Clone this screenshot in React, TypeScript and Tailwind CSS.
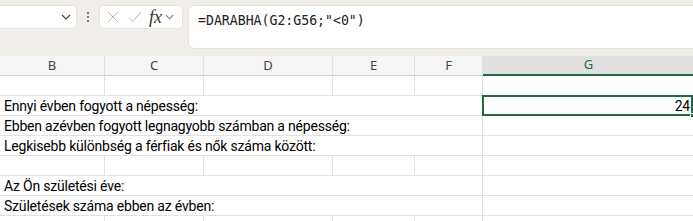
import React from "react";

const cols = ["B", "C", "D", "E", "F", "G"];
const widths = ["w-[105px]", "w-[99px]", "w-[129px]", "w-[82px]", "w-[68px]", "w-[212px]"];

type Row = { text?: string; value?: string; selected?: boolean };

const rows: Row[] = [
  {},
  { text: "Ennyi évben fogyott a népesség:", value: "24", selected: true },
  { text: "Ebben azévben fogyott legnagyobb számban a népesség:" },
  { text: "Legkisebb különbség a férfiak és nők száma között:" },
  {},
  { text: "Az Ön születési éve:" },
  { text: "Születések száma ebben az évben:" },
  {},
];

const Chevron = ({ className }: { className?: string }) => (
  <svg viewBox="0 0 10 6" className={className} fill="none" stroke="currentColor" strokeWidth="1.2">
    <path d="M1 1l4 4 4-4" />
  </svg>
);

const Toolbar = () => (
  <div className="flex h-[56px] items-start bg-[#f1eee9] pt-[5px]">
    <div className="-ml-[8px] flex h-[24px] w-[85px] items-center justify-end rounded-[5px] border border-[#e6e2dc] bg-white pr-[5px] text-[#444]">
      <Chevron className="h-[6px] w-[10px]" />
    </div>
    <div className="flex w-[22px] flex-col items-center justify-center gap-[2px] pt-[7px]">
      <span className="h-[2px] w-[2px] rounded-full bg-[#555]" />
      <span className="h-[2px] w-[2px] rounded-full bg-[#555]" />
      <span className="h-[2px] w-[2px] rounded-full bg-[#555]" />
    </div>
    <div className="flex h-[24px] w-[84px] items-center rounded-[5px] border border-[#e6e2dc] bg-white pl-[7px]">
      <svg viewBox="0 0 12 12" className="h-[12px] w-[12px] text-[#b9b9b9]" fill="none" stroke="currentColor" strokeWidth="1">
        <path d="M1 1l10 10M11 1L1 11" />
      </svg>
      <svg viewBox="0 0 14 12" className="ml-[9px] h-[12px] w-[14px] text-[#b9b9b9]" fill="none" stroke="currentColor" strokeWidth="1">
        <path d="M1 6.5l4 4L13 1" />
      </svg>
      <span className="ml-[7px] font-['Liberation_Serif',serif] text-[18px] italic leading-none text-[#333]">
        fx
      </span>
      <Chevron className="ml-[3px] h-[6px] w-[9px] text-[#777]" />
    </div>
    <div className="ml-[5px] h-[44px] flex-1 -mr-[10px] rounded-[6px] border border-[#e6e2dc] bg-white pl-[9px] pt-[5px] font-['DejaVu_Sans_Mono',monospace] text-[13.2px] text-[#222]">
      =DARABHA(G2:G56;"&lt;0")
    </div>
  </div>
);

const Header = () => (
  <div className="flex h-[20px] bg-[#f5f5f5] font-['Noto_Sans',sans-serif] text-[13px] text-[#444]">
    {cols.map((c, i) => {
      const sel = c === "G";
      return (
        <div
          key={c}
          className={`${widths[i]} flex shrink-0 items-center justify-center border-r ${
            sel
              ? "border-[#d8d8d8] border-b-2 border-b-[#1f6b40] bg-[#e0e0e0] text-[#1f6b40]"
              : "border-[#e0e0e0] border-b border-b-[#d0d0d0]"
          }`}
        >
          {c}
        </div>
      );
    })}
  </div>
);

const SheetRow = ({ row }: { row: Row }) => {
  const cell = "h-[20px] shrink-0 border-r border-b border-[#e1e1e1]";
  return (
    <div className="flex font-['Roboto',sans-serif] text-[14px] tracking-[-0.2px] text-black">
      {row.text ? (
        <div className={`${cell} w-[483px] truncate whitespace-nowrap pl-[4px] leading-[20px]`}>{row.text}</div>
      ) : (
        widths.slice(0, 5).map((w, i) => <div key={i} className={`${cell} ${w}`} />)
      )}
      <div className={`${cell} ${widths[5]} relative pr-[4px] text-right leading-[20px]`}>
        {row.value}
        {row.selected && (
          <>
            <div className="absolute -left-[1px] -top-[1px] h-[21px] w-[211px] border-2 border-[#1f6b40]" />
            <div className="absolute -bottom-[3px] left-[207px] h-[5px] w-[5px] border border-white bg-[#1f6b40]" />
          </>
        )}
      </div>
    </div>
  );
};

export default function App() {
  return (
    <div className="h-[221px] w-[693px] overflow-hidden bg-white">
      <Toolbar />
      <Header />
      {rows.map((r, i) => (
        <SheetRow key={i} row={r} />
      ))}
    </div>
  );
}
